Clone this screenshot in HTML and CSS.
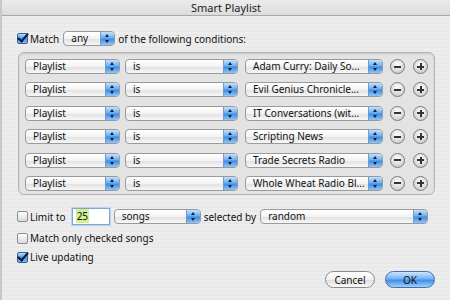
FILE: index.html
```html
<!DOCTYPE html>
<html lang="en">
<head>
    <meta charset="UTF-8">
    <title>Smart Playlist</title>
    <link rel="stylesheet" href="styles.css">
</head>
<body>
    <div class="window">
        <div class="titlebar">Smart Playlist</div>

        <div class="match-row">
            <span class="checkbox checked"></span>
            <span class="label">Match</span>
            <div class="popup popup-any">
                <span class="popup-text">any</span>
                <span class="popup-arrows"></span>
            </div>
            <span class="label">of the following conditions:</span>
        </div>

        <div class="conditions">
            <div class="rule">
                <div class="popup field"><span class="popup-text">Playlist</span><span class="popup-arrows"></span></div>
                <div class="popup operator"><span class="popup-text">is</span><span class="popup-arrows"></span></div>
                <div class="popup value"><span class="popup-text">Adam Curry: Daily So...</span><span class="popup-arrows"></span></div>
                <span class="round-btn minus"></span>
                <span class="round-btn plus"></span>
            </div>
            <div class="rule">
                <div class="popup field"><span class="popup-text">Playlist</span><span class="popup-arrows"></span></div>
                <div class="popup operator"><span class="popup-text">is</span><span class="popup-arrows"></span></div>
                <div class="popup value"><span class="popup-text">Evil Genius Chronicle...</span><span class="popup-arrows"></span></div>
                <span class="round-btn minus"></span>
                <span class="round-btn plus"></span>
            </div>
            <div class="rule">
                <div class="popup field"><span class="popup-text">Playlist</span><span class="popup-arrows"></span></div>
                <div class="popup operator"><span class="popup-text">is</span><span class="popup-arrows"></span></div>
                <div class="popup value"><span class="popup-text">IT Conversations (wit...</span><span class="popup-arrows"></span></div>
                <span class="round-btn minus"></span>
                <span class="round-btn plus"></span>
            </div>
            <div class="rule">
                <div class="popup field"><span class="popup-text">Playlist</span><span class="popup-arrows"></span></div>
                <div class="popup operator"><span class="popup-text">is</span><span class="popup-arrows"></span></div>
                <div class="popup value"><span class="popup-text">Scripting News</span><span class="popup-arrows"></span></div>
                <span class="round-btn minus"></span>
                <span class="round-btn plus"></span>
            </div>
            <div class="rule">
                <div class="popup field"><span class="popup-text">Playlist</span><span class="popup-arrows"></span></div>
                <div class="popup operator"><span class="popup-text">is</span><span class="popup-arrows"></span></div>
                <div class="popup value"><span class="popup-text">Trade Secrets Radio</span><span class="popup-arrows"></span></div>
                <span class="round-btn minus"></span>
                <span class="round-btn plus"></span>
            </div>
            <div class="rule">
                <div class="popup field"><span class="popup-text">Playlist</span><span class="popup-arrows"></span></div>
                <div class="popup operator"><span class="popup-text">is</span><span class="popup-arrows"></span></div>
                <div class="popup value"><span class="popup-text">Whole Wheat Radio Bl...</span><span class="popup-arrows"></span></div>
                <span class="round-btn minus"></span>
                <span class="round-btn plus"></span>
            </div>
        </div>

        <div class="limit-row">
            <span class="checkbox"></span>
            <span class="label">Limit to</span>
            <div class="text-field"><span class="selection">25</span></div>
            <div class="popup popup-unit"><span class="popup-text">songs</span><span class="popup-arrows"></span></div>
            <span class="label">selected by</span>
            <div class="popup popup-order"><span class="popup-text">random</span><span class="popup-arrows"></span></div>
        </div>

        <div class="option-row">
            <span class="checkbox"></span>
            <span class="label">Match only checked songs</span>
        </div>

        <div class="option-row live">
            <span class="checkbox checked"></span>
            <span class="label">Live updating</span>
        </div>

        <div class="buttons">
            <button class="btn cancel">Cancel</button>
            <button class="btn ok">OK</button>
        </div>
    </div>
</body>
</html>
```

FILE: styles.css
```css
* {
    margin: 0;
    padding: 0;
    box-sizing: border-box;
}

body {
    width: 450px;
    height: 300px;
    overflow: hidden;
    font-family: 'Noto Sans', 'Liberation Sans', sans-serif;
    font-size: 10px;
    color: #111;
}

.window {
    width: 450px;
    height: 300px;
    background: repeating-linear-gradient(180deg, #ededed 0, #ededed 2px, #e9e9e9 2px, #e9e9e9 4px);
    border-left: 2px solid #c8c8c8;
}

.titlebar {
    height: 16px;
    line-height: 15px;
    text-align: center;
    font-size: 11px;
    background: linear-gradient(180deg, #ececec, #dcdcdc);
    border-bottom: 1px solid #a9a9a9;
    color: #222;
}

.label {
    white-space: nowrap;
}

/* checkboxes */
.checkbox {
    width: 11px;
    height: 11px;
    flex: none;
    border: 1px solid #8d8d8d;
    border-radius: 2px;
    background: linear-gradient(180deg, #ffffff, #d9d9d9);
    position: relative;
}

.checkbox.checked {
    border-color: #355f9c;
    background: linear-gradient(180deg, #b8dcfb, #4d95e5 50%, #7ab8f3);
}

.checkbox.checked::after {
    content: "";
    position: absolute;
    left: 2px;
    top: -3px;
    width: 4px;
    height: 9px;
    border-right: 2.5px solid #0d1a33;
    border-bottom: 2.5px solid #0d1a33;
    transform: rotate(40deg);
}

/* popup menus */
.popup {
    height: 15px;
    display: flex;
    flex: none;
    border: 1px solid #9a9a9a;
    border-radius: 4px;
    background: linear-gradient(180deg, #ffffff, #f3f3f3 50%, #e2e2e2 55%, #f7f7f7);
    overflow: hidden;
}

.popup-text {
    flex: 1;
    padding-left: 7px;
    line-height: 13px;
    white-space: nowrap;
    overflow: hidden;
}

.popup-arrows {
    width: 14px;
    flex: none;
    position: relative;
    border-left: 1px solid #6c9ad3;
    background: linear-gradient(180deg, #c4e2fc, #6aaef0 45%, #3e8de6 55%, #8fc6f7);
}

.popup-arrows::before,
.popup-arrows::after {
    content: "";
    position: absolute;
    left: 4px;
    border-left: 2.5px solid transparent;
    border-right: 2.5px solid transparent;
}

.popup-arrows::before {
    top: 2px;
    border-bottom: 3px solid #10203a;
}

.popup-arrows::after {
    bottom: 2px;
    border-top: 3px solid #10203a;
}

/* match row */
.match-row {
    display: flex;
    align-items: center;
    height: 15px;
    margin: 15px 0 0 15px;
    gap: 2px;
}

.popup-any {
    width: 52px;
    margin: 0 1px 0 2px;
}

/* conditions group */
.conditions {
    width: 417px;
    height: 143px;
    margin: 6px 0 0 16px;
    padding: 6px 0 0 6px;
    border: 1px solid #b3b3b3;
    border-radius: 6px;
    background: #e3e3e3;
    box-shadow: inset 0 1px 2px rgba(0, 0, 0, 0.12);
    display: flex;
    flex-direction: column;
    gap: 8.4px;
}

.rule {
    display: flex;
    align-items: center;
    height: 15px;
}

.field {
    width: 95px;
}

.operator {
    width: 113px;
    margin-left: 5px;
}

.value {
    width: 138px;
    margin-left: 7px;
}

.round-btn {
    width: 15px;
    height: 15px;
    flex: none;
    border-radius: 50%;
    border: 1px solid #7c7c7c;
    background: radial-gradient(circle at 50% 35%, #ffffff, #dadada 60%, #bdbdbd);
    position: relative;
    margin-left: 7px;
}

.round-btn.plus {
    margin-left: 8px;
}

.round-btn::before,
.round-btn::after {
    content: "";
    position: absolute;
    background: #333;
}

.round-btn::before {
    left: 3px;
    top: 5.5px;
    width: 7px;
    height: 2px;
}

.plus::after {
    left: 5.5px;
    top: 3px;
    width: 2px;
    height: 7px;
}

/* limit row */
.limit-row {
    display: flex;
    align-items: center;
    height: 17px;
    margin: 13px 0 0 15px;
    gap: 2px;
}

.text-field {
    width: 38px;
    height: 17px;
    margin: 0 2px 0 4px;
    border: 1px solid #7fa6d6;
    box-shadow: 0 0 0 1px #bcd4ef;
    background: #fff;
    padding: 1px 0 0 3px;
    line-height: 13px;
}

.selection {
    background: #d2f08f;
    padding: 0 1px;
}

.popup-unit {
    width: 87px;
    margin-right: 1px;
}

.popup-order {
    width: 168px;
    margin-left: 2px;
}

/* option rows */
.option-row {
    display: flex;
    align-items: center;
    height: 14px;
    margin: 6px 0 0 15px;
    gap: 2px;
}

.option-row.live {
    margin-top: 5px;
}

/* buttons */
.buttons {
    display: flex;
    justify-content: flex-end;
    gap: 10px;
    margin-top: 7px;
    padding-right: 15px;
}

.btn {
    width: 50px;
    height: 17px;
    border-radius: 9px;
    font-family: 'Noto Sans', 'Liberation Sans', sans-serif;
    font-size: 10px;
    color: #111;
    border: 1px solid #8a8a8a;
    background: linear-gradient(180deg, #ffffff, #f1f1f1 50%, #dddddd 55%, #fbfbfb);
}

.btn.ok {
    border-color: #4a6fa8;
    background: linear-gradient(180deg, #cde6fd, #74b3f2 45%, #3f8ee8 55%, #9fd1fa);
}
```
